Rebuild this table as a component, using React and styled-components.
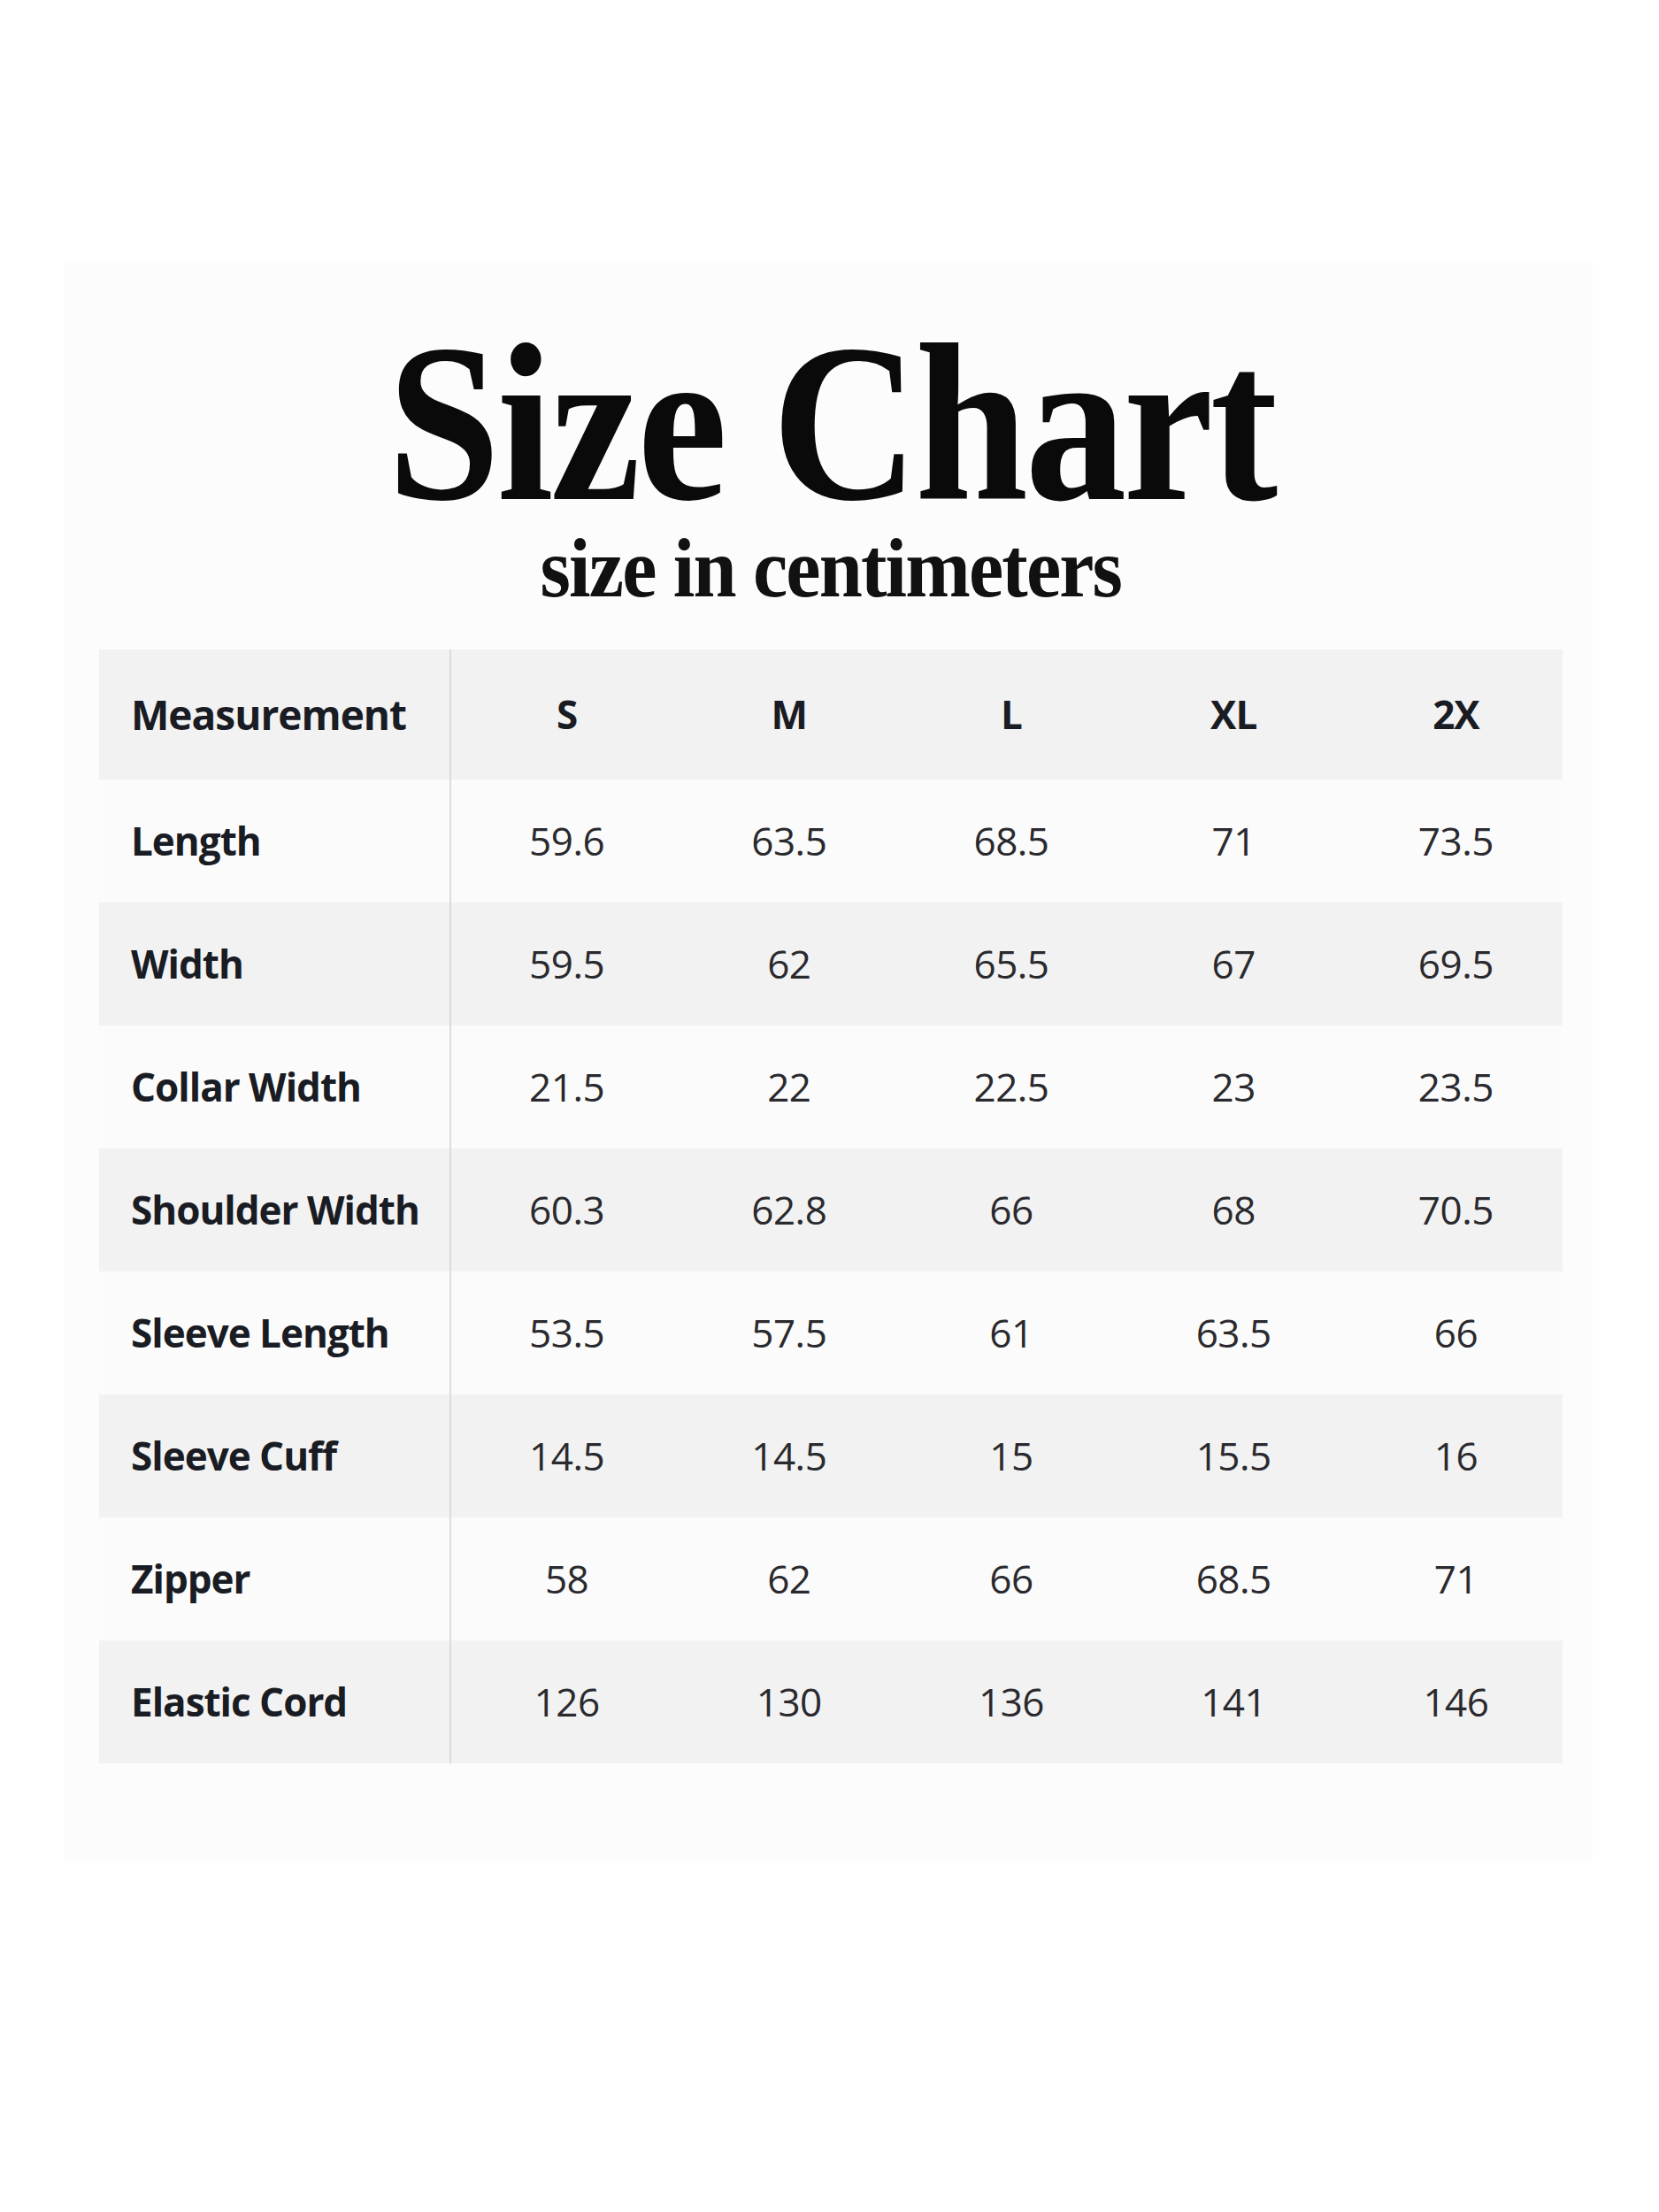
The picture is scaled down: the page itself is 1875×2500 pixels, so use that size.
import React from 'react';
import styled, { createGlobalStyle } from 'styled-components';

const GlobalStyle = createGlobalStyle`
  html, body {
    margin: 0;
    padding: 0;
    background: #ffffff;
  }
  body {
    font-family: "Open Sans", "Liberation Sans", sans-serif;
  }
`;

const Page = styled.div`
  width: 1875px;
  min-height: 2500px;
  background: #ffffff;
  padding-top: 295px;
  box-sizing: border-box;
`;

const Card = styled.div`
  margin-left: 72px;
  width: 1728px;
  background: #fcfcfc;
  padding: 69px 34px 110px 40px;
  box-sizing: border-box;
  display: flex;
  flex-direction: column;
  align-items: center;
`;

const Title = styled.h1`
  margin: 0;
  font-family: "Liberation Serif", "DejaVu Serif", serif;
  font-weight: 700;
  font-size: 255px;
  line-height: 0.9;
  letter-spacing: -4px;
  color: #0a0a0a;
  transform: scaleX(0.9);
`;

const Subtitle = styled.h2`
  margin: 0;
  font-family: "Liberation Serif", "DejaVu Serif", serif;
  font-weight: 700;
  font-size: 96px;
  line-height: 1;
  letter-spacing: -2px;
  color: #111111;
  transform: scaleX(0.92);
`;

const Table = styled.div`
  margin-top: 44px;
  width: 100%;
  display: grid;
  grid-template-columns: 398px repeat(5, 1fr);
`;

const Cell = styled.div`
  height: ${p => (p.head ? 147 : 139)}px;
  background: ${p => (p.shade ? '#f2f2f2' : '#fbfbfb')};
  display: flex;
  align-items: center;
  justify-content: ${p => (p.label ? 'flex-start' : 'center')};
  padding-left: ${p => (p.label ? 36 : 10)}px;
  box-sizing: border-box;
  border-right: ${p => (p.label ? '2px solid #dcdcdc' : 'none')};
  font-family: "Open Sans", "Liberation Sans", sans-serif;
  font-size: ${p => (p.head && p.label ? 46 : 44)}px;
  font-weight: ${p => (p.bold ? 700 : 400)};
  letter-spacing: ${p => (p.bold ? '-1px' : '-0.5px')};
  color: ${p => (p.bold ? '#1a1c24' : '#2a2a2e')};
`;

const sizes = ['S', 'M', 'L', 'XL', '2X'];

const rows = [
  ['Length', '59.6', '63.5', '68.5', '71', '73.5'],
  ['Width', '59.5', '62', '65.5', '67', '69.5'],
  ['Collar Width', '21.5', '22', '22.5', '23', '23.5'],
  ['Shoulder Width', '60.3', '62.8', '66', '68', '70.5'],
  ['Sleeve Length', '53.5', '57.5', '61', '63.5', '66'],
  ['Sleeve Cuff', '14.5', '14.5', '15', '15.5', '16'],
  ['Zipper', '58', '62', '66', '68.5', '71'],
  ['Elastic Cord', '126', '130', '136', '141', '146'],
];

const App = () => {
  return (
    <Page>
      <GlobalStyle />
      <Card>
        <Title>Size Chart</Title>
        <Subtitle>size in centimeters</Subtitle>
        <Table>
          <Cell head shade label bold>Measurement</Cell>
          {sizes.map(s => (
            <Cell key={s} head shade bold>{s}</Cell>
          ))}
          {rows.map(([name, ...values], i) => {
            const shade = i % 2 === 1;
            return (
              <React.Fragment key={name}>
                <Cell shade={shade} label bold>{name}</Cell>
                {values.map((v, j) => (
                  <Cell key={j} shade={shade}>{v}</Cell>
                ))}
              </React.Fragment>
            );
          })}
        </Table>
      </Card>
    </Page>
  );
};

export default App;
